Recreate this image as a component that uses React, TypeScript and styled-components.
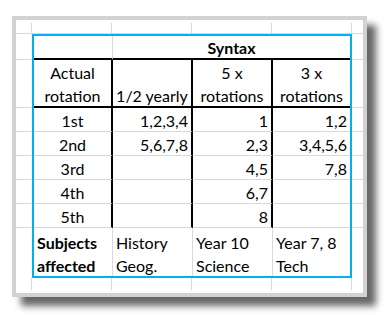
import styled, { createGlobalStyle } from 'styled-components';

const GRID = '#d9d9d9';
const BLUE = '#00b0f0';
const INK = '#000';

const GlobalStyle = createGlobalStyle`
  html, body {
    margin: 0;
    padding: 0;
    background: #fff;
  }
  body {
    font-family: Lato, 'Open Sans', sans-serif;
  }
`;

const Page = styled.div`
  width: 388px;
  height: 315px;
  box-sizing: border-box;
  padding: 16px 0 0 12px;
`;

const Frame = styled.div`
  width: 355px;
  height: 281px;
  box-sizing: border-box;
  border: 4px solid #d2d2d2;
  background: #fff;
  box-shadow: 9px 9px 7px rgba(0, 0, 0, 0.6);
  padding-top: 3px;
`;

const Sheet = styled.div`
  display: grid;
  grid-template-columns: 16px 320px 11px;
  grid-template-rows: 11px 244px 12px;
`;

// gridlines around the bordered block
const Strip = styled.div<{ $dir: 'row' | 'column' }>`
  display: flex;
  flex-direction: ${({ $dir }) => $dir};
`;

const Line = styled.div<{ $w?: number; $h?: number; $right?: boolean; $bottom?: boolean }>`
  box-sizing: border-box;
  flex: none;
  width: ${({ $w }) => ($w ? `${$w}px` : '100%')};
  height: ${({ $h }) => ($h ? `${$h}px` : '100%')};
  border-right: ${({ $right }) => ($right ? `1px solid ${GRID}` : 'none')};
  border-bottom: ${({ $bottom }) => ($bottom ? `1px solid ${GRID}` : 'none')};
`;

const Table = styled.div`
  box-sizing: border-box;
  border: 2px solid ${BLUE};
  display: grid;
  grid-template-columns: 79px 80px 80px 77px;
  grid-template-rows: 24px 48px repeat(5, 24px) 48px;
  font-size: 16px;
  color: ${INK};
`;

type Edge = 'grid' | 'thick' | 'none';
const edge = (e: Edge) =>
  e === 'thick' ? `2px solid ${INK}` : e === 'grid' ? `1px solid ${GRID}` : 'none';

// excel puts the text near the bottom of the cell
const Cell = styled.div<{
  $align?: 'left' | 'center' | 'right';
  $bold?: boolean;
  $right?: Edge;
  $bottom?: Edge;
  $span?: number;
}>`
  box-sizing: border-box;
  display: flex;
  flex-direction: column;
  justify-content: flex-end;
  gap: 3px;
  padding: 0 3px;
  line-height: 20px;
  white-space: nowrap;
  text-align: ${({ $align }) => $align ?? 'left'};
  font-weight: ${({ $bold }) => ($bold ? 700 : 400)};
  grid-column: span ${({ $span }) => $span ?? 1};
  border-right: ${({ $right }) => edge($right ?? 'grid')};
  border-bottom: ${({ $bottom }) => edge($bottom ?? 'grid')};
`;

const rowHeights = [26, 48, 24, 24, 24, 24, 24, 50];
const colWidths = [80, 80, 80, 80];

const data = [
  ['1st', '1,2,3,4', '1', '1,2'],
  ['2nd', '5,6,7,8', '2,3', '3,4,5,6'],
  ['3rd', '', '4,5', '7,8'],
  ['4th', '', '6,7', ''],
  ['5th', '', '8', ''],
];

const SideStrip = () => (
  <Strip $dir="column">
    {rowHeights.map((h, i) => (
      <Line key={i} $h={h} $bottom={i < rowHeights.length - 1} />
    ))}
  </Strip>
);

const EdgeStrip = ({ bottom }: { bottom?: boolean }) => (
  <Strip $dir="row">
    {colWidths.map((w, i) => (
      <Line key={i} $w={w} $right $bottom={!bottom} />
    ))}
  </Strip>
);

export default function App() {
  return (
    <>
      <GlobalStyle />
      <Page>
        <Frame>
          <Sheet>
            <Line $right $bottom />
            <EdgeStrip />
            <Line $bottom />

            <SideStrip />
            <Table>
              <Cell $bottom="thick" />
              <Cell $span={3} $align="center" $bold $right="none" $bottom="thick">
                Syntax
              </Cell>

              <Cell $align="center" $right="thick" $bottom="thick">
                <div>Actual</div>
                <div>rotation</div>
              </Cell>
              <Cell $align="center" $right="thick" $bottom="thick">
                1/2 yearly
              </Cell>
              <Cell $align="center" $right="thick" $bottom="thick">
                <div>5 x</div>
                <div>rotations</div>
              </Cell>
              <Cell $align="center" $right="none" $bottom="thick">
                <div>3 x</div>
                <div>rotations</div>
              </Cell>

              {data.map((row, r) =>
                row.map((v, c) => (
                  <Cell
                    key={`${r}-${c}`}
                    $align={c === 0 ? 'center' : 'right'}
                    $right={c === 3 ? 'none' : 'thick'}
                  >
                    {v}
                  </Cell>
                ))
              )}

              <Cell $bold $bottom="none">
                <div>Subjects</div>
                <div>affected</div>
              </Cell>
              <Cell $bottom="none">
                <div>History</div>
                <div>Geog.</div>
              </Cell>
              <Cell $bottom="none">
                <div>Year 10</div>
                <div>Science</div>
              </Cell>
              <Cell $right="none" $bottom="none">
                <div>Year 7, 8</div>
                <div>Tech</div>
              </Cell>
            </Table>
            <SideStrip />

            <Line $right />
            <EdgeStrip bottom />
            <Line />
          </Sheet>
        </Frame>
      </Page>
    </>
  );
}
